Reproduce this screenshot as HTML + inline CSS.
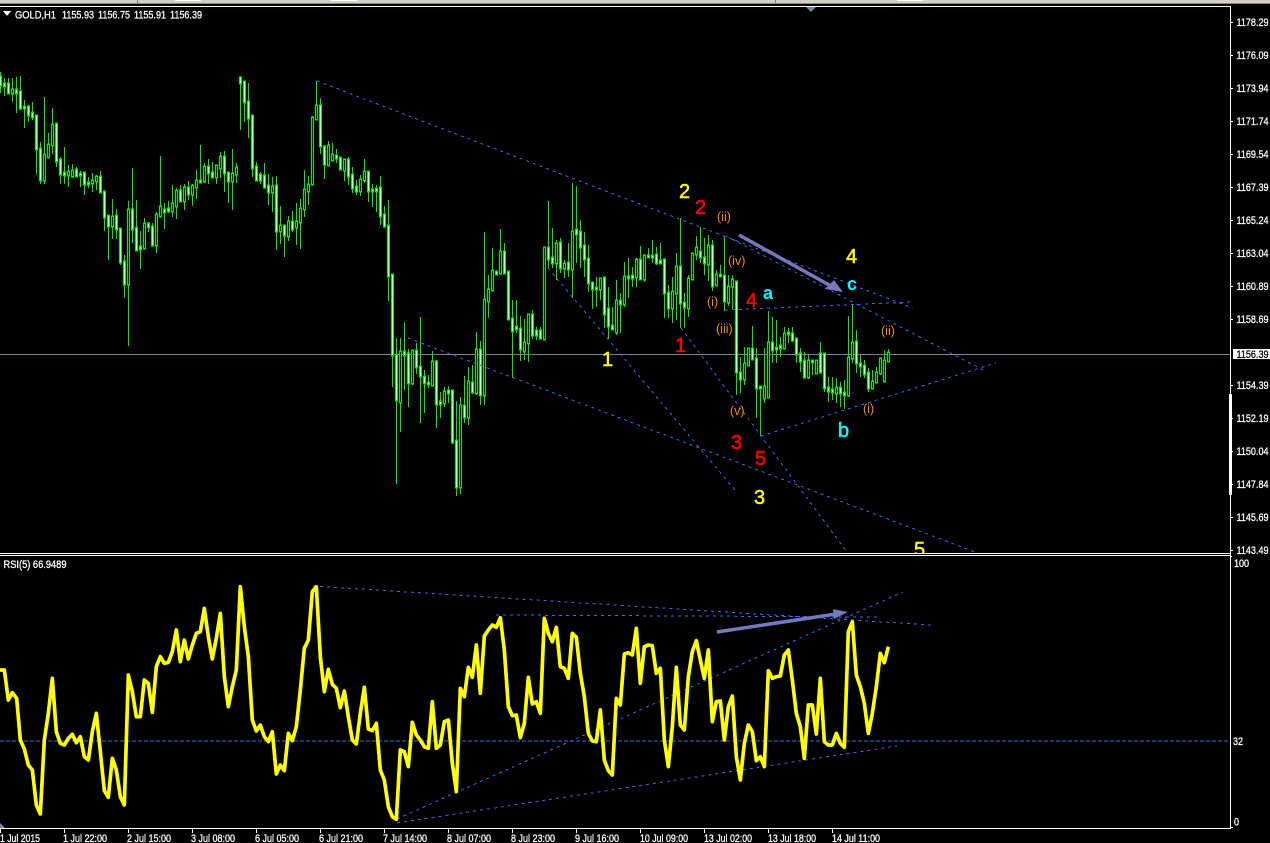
<!DOCTYPE html>
<html lang="en">
<head>
<meta charset="utf-8">
<title>GOLD,H1</title>
<style>
html,body{margin:0;padding:0;background:#000;width:1270px;height:843px;overflow:hidden}
svg{display:block;position:absolute;left:0;top:0}
text{font-family:"Liberation Sans",Arial,sans-serif}
.a text{font-size:11px;fill:#fff;stroke:#fff;stroke-width:.3px}
.l text{font-size:20px;stroke-width:.5px}
.o text{font-size:12.5px;fill:#f28c0f}
</style>
</head>
<body>
<svg xmlns="http://www.w3.org/2000/svg" width="1270" height="843" viewBox="0 0 1270 843">
<rect width="1270" height="843" fill="#000"/>
<rect width="1270" height="3" fill="#d4d0c8"/>
<rect y="3" width="1270" height="1" fill="#8a8878"/>
<rect x="175" width="26" height="1" fill="#fff"/><rect x="331" width="26" height="1" fill="#fff"/><rect x="897" width="26" height="1" fill="#fff"/>
<rect x="137" width="1" height="3" fill="#808080"/><rect x="775" width="1" height="3" fill="#808080"/>

<rect x="0" y="354" width="1230" height="1" fill="#778899"/>

<g shape-rendering="crispEdges" fill="none">
<path stroke="#00ee00" stroke-width="1" d="M.5 72V93M4.5 78V96M8.5 78V93M12.5 78V102M16.5 77V113M20.5 76V110M24.5 100V128M28.5 105V122M32.5 102V120M36.5 116V174M40.5 142V184M44.5 97V184M48.5 133V158M52.5 108V154M56.5 124V167M60.5 157V184M64.5 147V184M68.5 165V187M72.5 164V178M76.5 167V177M80.5 171V187M84.5 173V195M88.5 177V188M92.5 173V192M96.5 175V190M100.5 171V193M104.5 190V231M108.5 216V260M112.5 199V239M116.5 209V239M120.5 228V265M124.5 255V298M128.5 201V346M132.5 168V243M136.5 200V250M140.5 231V269M144.5 218V248M148.5 222V232M152.5 223V247M156.5 212V253M160.5 156V217M164.5 203V229M168.5 201V213M172.5 185V217M176.5 188V219M180.5 185V202M184.5 184V210M188.5 181V200M192.5 184V206M196.5 170V199M200.5 145V182M204.5 163V183M208.5 159V184M212.5 162V178M216.5 166V184M220.5 152V178M224.5 151V192M228.5 172V203M232.5 149V210M236.5 163V183M240.5 76V130M244.5 81V122M248.5 83V138M252.5 116V177M256.5 162V180M260.5 172V184M264.5 163V189M268.5 174V205M272.5 177V212M276.5 176V250M280.5 206V244M284.5 225V257M288.5 216V241M292.5 211V232M296.5 203V245M300.5 199V249M304.5 170V217M308.5 176V205M312.5 116V184M316.5 81V119M320.5 98V154M324.5 145V179M328.5 141V166M332.5 143V160M336.5 149V163M340.5 157V170M344.5 160V181M348.5 157V185M352.5 167V193M356.5 180V195M360.5 175V196M364.5 159V183M368.5 172V202M372.5 184V207M376.5 185V212M380.5 176V225M384.5 206V228M388.5 200V301M392.5 275V387M396.5 338V484M400.5 338V432M404.5 322V390M408.5 349V407M412.5 351V385M416.5 343V374M420.5 317V423M424.5 370V413M428.5 375V388M432.5 351V386M436.5 360V428M440.5 392V418M444.5 387V407M448.5 386V403M452.5 391V444M456.5 401V496M460.5 397V494M464.5 376V423M468.5 367V425M472.5 365V394M476.5 332V395M480.5 341V405M484.5 232V405M488.5 275V318M492.5 248V291M496.5 270V275M500.5 229V274M504.5 243V273M508.5 272V320M512.5 300V378M516.5 300V333M520.5 316V361M524.5 319V360M528.5 314V362M532.5 310V339M536.5 327V340M540.5 327V340M544.5 248V339M548.5 201V268M552.5 228V268M556.5 240V280M560.5 238V273M564.5 260V278M568.5 243V277M572.5 183V298M576.5 186V263M580.5 220V268M584.5 232V277M588.5 245V292M592.5 282V309M596.5 277V307M600.5 278V300M604.5 277V328M608.5 287V339M612.5 307V330M616.5 280V335M620.5 293V333M624.5 262V307M628.5 258V298M632.5 267V287M636.5 258V287M640.5 246V280M644.5 255V282M648.5 248V258M652.5 240V263M656.5 247V265M660.5 243V264M664.5 258V318M668.5 285V318M672.5 277V323M676.5 253V320M680.5 218V328M684.5 293V328M688.5 275V317M692.5 253V280M696.5 236V260M700.5 227V263M704.5 238V275M708.5 235V281M712.5 240V291M716.5 270V286M720.5 265V277M724.5 236V311M728.5 275V306M732.5 275V309M736.5 282V395M740.5 357V393M744.5 347V385M748.5 348V365M752.5 326V360M756.5 348V418M760.5 387V436M764.5 348V403M768.5 311V397M772.5 317V363M776.5 320V363M780.5 337V357M784.5 327V348M788.5 328V343M792.5 327V342M796.5 338V363M800.5 348V372M804.5 352V379M808.5 355V379M812.5 360V375M816.5 360V374M820.5 342V374M824.5 354V392M828.5 377V402M832.5 377V400M836.5 378V403M840.5 382V407M844.5 380V409M848.5 316V397M852.5 304V363M856.5 330V373M860.5 355V377M864.5 360V378M868.5 368V392M872.5 370V389M876.5 367V383M880.5 358V375M884.5 350V381M888.5 349V362"/>
<defs>
<path id="w" d="M.5 77V85M4.5 84V86M8.5 84V93M16.5 90V93M20.5 92V108M24.5 107V108M28.5 107V115M32.5 113V117M36.5 116V149M40.5 149V180M56.5 124V161M60.5 160V174M64.5 173V175M76.5 170V176M80.5 174V175M84.5 173V184M88.5 183V184M100.5 177V192M104.5 192V217M108.5 216V226M116.5 216V229M120.5 229V262M124.5 262V284M132.5 210V229M136.5 228V250M140.5 247V249M148.5 224V227M152.5 227V245M164.5 210V212M168.5 209V211M180.5 191V201M188.5 188V194M200.5 181V182M208.5 167V173M212.5 173V177M224.5 157V173M228.5 173V181M240.5 78V83M244.5 82V102M248.5 102V118M252.5 116V168M256.5 167V180M260.5 175V180M264.5 176V187M268.5 186V192M276.5 186V231M284.5 226V235M292.5 222V229M320.5 106V146M324.5 147V164M336.5 156V158M340.5 158V169M348.5 160V176M352.5 175V188M356.5 187V191M368.5 172V191M372.5 190V191M376.5 189V191M380.5 188V216M384.5 215V226M388.5 226V276M392.5 275V355M396.5 355V400M404.5 352V355M408.5 354V383M416.5 351V367M420.5 367V376M424.5 377V383M428.5 383V384M436.5 362V404M440.5 402V404M448.5 391V393M452.5 391V442M456.5 441V487M464.5 406V417M472.5 383V392M480.5 350V395M496.5 272V274M504.5 252V273M508.5 272V319M512.5 319V331M516.5 327V329M520.5 329V349M532.5 315V335M536.5 331V335M540.5 331V338M548.5 248V259M552.5 258V263M560.5 243V268M568.5 263V269M576.5 230V234M580.5 232V247M584.5 246V259M588.5 259V283M592.5 283V289M596.5 288V289M604.5 278V314M608.5 309V326M612.5 326V329M620.5 301V304M628.5 277V278M632.5 276V278M640.5 260V279M648.5 256V257M652.5 256V257M656.5 255V263M660.5 261V263M664.5 260V293M668.5 293V308M680.5 267V303M684.5 303V307M700.5 252V257M704.5 258V263M712.5 246V286M720.5 275V276M724.5 276V301M736.5 282V372M740.5 373V379M752.5 349V359M756.5 359V388M760.5 387V388M772.5 343V350M776.5 348V349M780.5 346V348M788.5 333V334M792.5 334V340M796.5 339V354M800.5 354V361M804.5 361V377M812.5 361V362M820.5 354V372M824.5 354V388M828.5 388V391M832.5 390V392M840.5 388V393M844.5 393V395M856.5 342V363M860.5 364V366M864.5 366V374M868.5 373V388"/>
<path id="k" d="M12.5 90V93M44.5 155V180M48.5 145V157M52.5 125V145M68.5 172V175M72.5 171V176M92.5 181V183M96.5 177V181M112.5 217V226M128.5 210V284M144.5 224V248M156.5 215V245M160.5 207V216M172.5 204V211M176.5 191V206M184.5 188V201M192.5 186V194M196.5 181V187M204.5 167V181M216.5 166V177M220.5 157V168M232.5 174V181M236.5 168V174M272.5 187V192M280.5 226V231M288.5 222V236M296.5 222V227M300.5 209V222M304.5 190V209M308.5 185V191M312.5 118V184M316.5 106V119M328.5 146V165M332.5 155V160M344.5 160V170M360.5 180V191M364.5 172V180M400.5 352V402M412.5 351V383M432.5 362V385M444.5 392V403M460.5 406V487M468.5 382V417M476.5 350V393M484.5 300V395M488.5 290V301M492.5 271V290M500.5 252V273M524.5 343V351M528.5 315V343M544.5 248V339M556.5 244V263M564.5 264V268M572.5 232V269M600.5 279V289M616.5 301V332M624.5 277V304M636.5 260V277M644.5 256V279M672.5 292V308M676.5 267V293M688.5 279V308M692.5 254V279M696.5 248V254M708.5 246V264M716.5 275V285M728.5 287V302M732.5 280V286M744.5 364V379M748.5 349V365M764.5 387V398M768.5 343V397M784.5 334V348M808.5 361V377M816.5 361V373M836.5 388V393M848.5 358V395M852.5 343V358M872.5 382V388M876.5 373V382M880.5 359V373M884.5 361V381M888.5 353V361"/>
</defs>
<g stroke="#00ee00" stroke-width="3" stroke-linecap="square"><use href="#w"/><use href="#k"/></g>
<use href="#w" stroke="#fff" stroke-width="1"/>
<use href="#k" stroke="#000" stroke-width="1"/>
</g>

<g fill="none" stroke="#4169e1" stroke-width="1" stroke-dasharray="3 4" shape-rendering="crispEdges">
<path d="M317 81L913 308"/>
<path d="M726 236L985 371"/>
<path d="M725 310L913 302"/>
<path d="M761 436L996 363"/>
<path d="M548 268L735 490"/>
<path d="M681 328L847 552"/>
<path d="M408 338L975 552"/>
</g>

<g class="l">
<text x="679" y="198" fill="#ffff00" stroke="#ffff00">2</text>
<text x="695" y="214" fill="#ff0000" stroke="#ff0000">2</text>
<text x="746" y="307" fill="#ff0000" stroke="#ff0000">4</text>
<text x="763" y="299" fill="#00ffff" font-weight="bold" style="font-size:18px">a</text>
<text x="602" y="366" fill="#ffff00" stroke="#ffff00">1</text>
<text x="675" y="352" fill="#ff0000" stroke="#ff0000">1</text>
<text x="731" y="449" fill="#ff0000" stroke="#ff0000">3</text>
<text x="755" y="465" fill="#ff0000" stroke="#ff0000">5</text>
<text x="754" y="504" fill="#ffff00" stroke="#ffff00">3</text>
<text x="914" y="556" fill="#ffff00" stroke="#ffff00">5</text>
<text x="846" y="263" fill="#ffff00" stroke="#ffff00">4</text>
<text x="847" y="290" fill="#00ffff" font-weight="bold" style="font-size:18px">c</text>
<text x="838" y="437" fill="#00ffff" stroke="#00ffff">b</text>
</g>
<g class="o">
<text x="717" y="221">(ii)</text>
<text x="728" y="265">(iv)</text>
<text x="707" y="306">(i)</text>
<text x="716" y="333">(iii)</text>
<text x="730" y="415">(v)</text>
<text x="881" y="335">(ii)</text>
<text x="863" y="413">(i)</text>
</g>

<path d="M739 235L831 286" stroke="#7878bc" stroke-width="3.5" fill="none"/>
<polygon points="843,292 825,289 834,280" fill="#7878bc"/>

<rect x="0" y="553" width="1270" height="275" fill="#000"/>

<path d="M0 741H1229" stroke="#4169e1" stroke-dasharray="4 2" shape-rendering="crispEdges"/>
<g fill="none" stroke="#4169e1" stroke-width="1" stroke-dasharray="3 4" shape-rendering="crispEdges">
<path d="M313 586L931 625"/>
<path d="M496 615L877 617"/>
<path d="M397 819L903 592"/>
<path d="M397 823L897 746"/>
</g>

<g fill="none" stroke="#ffff00" stroke-width="11" stroke-linejoin="round">
<polyline transform="translate(0 550) scale(.33333)" points="0,360 13,360 25,450 37,428 50,445 61,570 73,597 85,645 97,660 109,765 121,792 133,570 145,490 157,385 169,545 181,580 193,585 205,565 217,553 229,578 241,560 253,620 265,630 277,545 289,490 301,605 313,722 325,742 337,625 349,660 361,740 373,765 385,375 397,425 409,500 421,500 433,390 445,400 457,487 469,350 481,320 493,340 505,337 517,305 529,240 541,335 553,270 565,327 577,285 589,250 601,245 613,175 625,260 637,327 649,265 661,190 673,380 685,470 697,410 709,360 721,110 733,230 745,320 757,510 769,543 781,525 793,560 805,575 817,545 829,672 841,645 853,662 865,550 877,572 889,530 901,420 913,295 925,270 937,125 949,110 961,320 973,425 985,358 997,403 1009,415 1021,473 1033,423 1045,500 1057,570 1069,582 1081,490 1093,412 1105,537 1117,542 1129,520 1141,660 1153,690 1165,770 1177,800 1189,808 1201,600 1213,605 1225,650 1237,517 1249,555 1261,570"/>
<polyline transform="translate(420 550) scale(.33333)" points="1,570 13,590 25,595 37,455 49,595 61,585 73,515 85,510 97,640 109,725 121,415 133,440 145,352 157,382 169,285 181,430 193,258 205,240 217,225 229,232 241,203 253,300 265,470 277,497 289,495 301,563 313,520 325,382 337,462 349,455 361,490 373,205 385,250 397,275 409,232 421,350 433,355 445,385 457,250 469,262 481,370 493,440 505,550 517,573 529,575 541,480 553,630 565,662 577,675 589,445 601,465 613,312 625,308 637,315 649,235 661,400 673,290 685,285 697,287 709,370 721,355 733,570 745,650 757,530 769,352 781,525 793,540 805,380 817,305 829,272 841,330 853,385 865,300 877,515 889,455 901,453 913,570 925,470 937,438 949,620 961,690 973,580 985,525 997,545 1009,632 1021,620 1033,650 1045,362 1057,385 1069,380 1081,378 1093,315 1105,300 1117,390 1129,490 1141,530 1153,625 1165,465 1177,465 1189,552 1201,385 1213,575 1225,585 1237,585 1249,550 1261,580 1273,592 1285,245 1297,215 1309,375 1321,410 1333,460 1345,550 1357,490 1369,410 1381,310 1393,338 1405,290"/>
</g>

<path d="M717 632L836 614" stroke="#7878bc" stroke-width="3.5" fill="none"/>
<polygon points="848,612 833,609 834,619" fill="#7878bc"/>

<polygon points="806,7 816,7 811,12" fill="#778899"/>
<polygon points="0,823 5,828 0,828" fill="#778899"/>

<g fill="#fff" shape-rendering="crispEdges">
<rect x="0" y="6" width="1231" height="1"/>
<rect x="1230" y="6" width="1" height="823"/>
<rect x="0" y="553" width="1231" height="1"/>
<rect x="0" y="555" width="1231" height="1"/>
<rect x="0" y="828" width="1231" height="1"/>
<rect x="1229" y="394" width="3" height="101"/>
<path d="M1231 22h2v1h-2zM1231 55h2v1h-2zM1231 88h2v1h-2zM1231 121h2v1h-2zM1231 154h2v1h-2zM1231 187h2v1h-2zM1231 220h2v1h-2zM1231 253h2v1h-2zM1231 286h2v1h-2zM1231 319h2v1h-2zM1231 385h2v1h-2zM1231 418h2v1h-2zM1231 451h2v1h-2zM1231 484h2v1h-2zM1231 517h2v1h-2zM1231 550h2v1h-2zM1231 556h1v1h-1zM1231 827h2v1h-2z"/>
<path d="M0 828h1v5h-1zM64 828h1v5h-1zM128 828h1v5h-1zM192 828h1v5h-1zM256 828h1v5h-1zM320 828h1v5h-1zM384 828h1v5h-1zM448 828h1v5h-1zM512 828h1v5h-1zM576 828h1v5h-1zM640 828h1v5h-1zM704 828h1v5h-1zM768 828h1v5h-1zM832 828h1v5h-1z"/>
<polygon points="3,11 11,11 7,16"/>
</g>
<rect x="1233" y="349" width="37" height="10" fill="#fff"/>

<g class="a">
<text x="15" y="18.5" textLength="41" lengthAdjust="spacingAndGlyphs">GOLD,H1</text>
<text x="62" y="18.5" textLength="32" lengthAdjust="spacingAndGlyphs">1155.93</text>
<text x="98" y="18.5" textLength="32" lengthAdjust="spacingAndGlyphs">1156.75</text>
<text x="134" y="18.5" textLength="32" lengthAdjust="spacingAndGlyphs">1155.91</text>
<text x="170" y="18.5" textLength="32" lengthAdjust="spacingAndGlyphs">1156.39</text>
<text x="3.5" y="568" textLength="63" lengthAdjust="spacingAndGlyphs">RSI(5) 66.9489</text>

<text x="1236.5" y="26" textLength="32" lengthAdjust="spacingAndGlyphs">1178.29</text>
<text x="1236.5" y="59" textLength="32" lengthAdjust="spacingAndGlyphs">1176.09</text>
<text x="1236.5" y="92" textLength="32" lengthAdjust="spacingAndGlyphs">1173.94</text>
<text x="1236.5" y="125" textLength="32" lengthAdjust="spacingAndGlyphs">1171.74</text>
<text x="1236.5" y="158" textLength="32" lengthAdjust="spacingAndGlyphs">1169.54</text>
<text x="1236.5" y="191" textLength="32" lengthAdjust="spacingAndGlyphs">1167.39</text>
<text x="1236.5" y="224" textLength="32" lengthAdjust="spacingAndGlyphs">1165.24</text>
<text x="1236.5" y="257" textLength="32" lengthAdjust="spacingAndGlyphs">1163.04</text>
<text x="1236.5" y="290" textLength="32" lengthAdjust="spacingAndGlyphs">1160.89</text>
<text x="1236.5" y="323" textLength="32" lengthAdjust="spacingAndGlyphs">1158.69</text>
<text x="1236.5" y="358" textLength="32" lengthAdjust="spacingAndGlyphs" style="fill:#000;stroke:#000">1156.39</text>
<text x="1236.5" y="389" textLength="32" lengthAdjust="spacingAndGlyphs">1154.39</text>
<text x="1236.5" y="422" textLength="32" lengthAdjust="spacingAndGlyphs">1152.19</text>
<text x="1236.5" y="455" textLength="32" lengthAdjust="spacingAndGlyphs">1150.04</text>
<text x="1236.5" y="488" textLength="32" lengthAdjust="spacingAndGlyphs">1147.84</text>
<text x="1236.5" y="521" textLength="32" lengthAdjust="spacingAndGlyphs">1145.69</text>
<text x="1236.5" y="554" textLength="32" lengthAdjust="spacingAndGlyphs">1143.49</text>

<text x="1234" y="567" textLength="15" lengthAdjust="spacingAndGlyphs">100</text>
<text x="1233" y="745" textLength="10" lengthAdjust="spacingAndGlyphs">32</text>
<text x="1234" y="825.5" textLength="5" lengthAdjust="spacingAndGlyphs">0</text>

<text x="0" y="842" textLength="40" lengthAdjust="spacingAndGlyphs">1 Jul 2015</text>
<text x="63" y="842" textLength="44" lengthAdjust="spacingAndGlyphs">1 Jul 22:00</text>
<text x="127" y="842" textLength="44" lengthAdjust="spacingAndGlyphs">2 Jul 15:00</text>
<text x="191" y="842" textLength="44" lengthAdjust="spacingAndGlyphs">3 Jul 08:00</text>
<text x="255" y="842" textLength="44" lengthAdjust="spacingAndGlyphs">6 Jul 05:00</text>
<text x="319" y="842" textLength="44" lengthAdjust="spacingAndGlyphs">6 Jul 21:00</text>
<text x="383" y="842" textLength="44" lengthAdjust="spacingAndGlyphs">7 Jul 14:00</text>
<text x="447" y="842" textLength="44" lengthAdjust="spacingAndGlyphs">8 Jul 07:00</text>
<text x="511" y="842" textLength="44" lengthAdjust="spacingAndGlyphs">8 Jul 23:00</text>
<text x="575" y="842" textLength="44" lengthAdjust="spacingAndGlyphs">9 Jul 16:00</text>
<text x="640" y="842" textLength="48" lengthAdjust="spacingAndGlyphs">10 Jul 09:00</text>
<text x="704" y="842" textLength="48" lengthAdjust="spacingAndGlyphs">13 Jul 02:00</text>
<text x="768" y="842" textLength="48" lengthAdjust="spacingAndGlyphs">13 Jul 18:00</text>
<text x="832" y="842" textLength="48" lengthAdjust="spacingAndGlyphs">14 Jul 11:00</text>
</g>
</svg>
</body>
</html>
